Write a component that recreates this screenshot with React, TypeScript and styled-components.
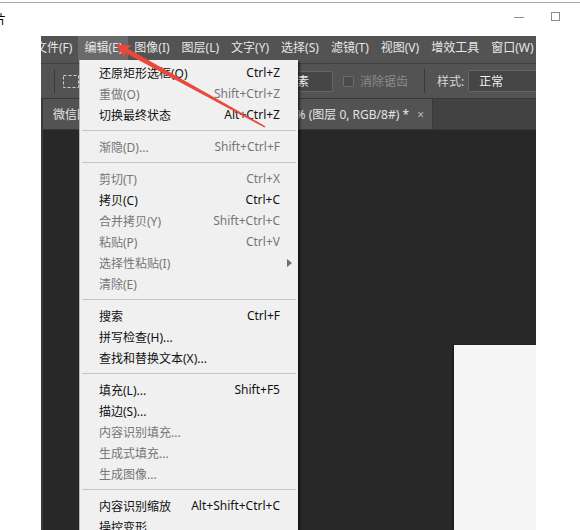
import React from "react";
import styled, { createGlobalStyle } from "styled-components";

const GlobalStyle = createGlobalStyle`
	html, body {
		margin: 0;
		padding: 0;
		background: #ffffff;
		overflow: hidden;
	}
	body {
		font-family: "Noto Sans", "Noto Sans CJK SC", sans-serif;
		font-size: 12px;
	}
`;

type MenuEntry =
	| { kind: "item"; label: string; shortcut?: string; disabled?: boolean; submenu?: boolean }
	| { kind: "sep" };

const topMenus = [
	"文件(F)",
	"编辑(E)",
	"图像(I)",
	"图层(L)",
	"文字(Y)",
	"选择(S)",
	"滤镜(T)",
	"视图(V)",
	"增效工具",
	"窗口(W)",
	"帮助(H)",
];

const editMenu: MenuEntry[] = [
	{ kind: "item", label: "还原矩形选框(O)", shortcut: "Ctrl+Z" },
	{ kind: "item", label: "重做(O)", shortcut: "Shift+Ctrl+Z", disabled: true },
	{ kind: "item", label: "切换最终状态", shortcut: "Alt+Ctrl+Z" },
	{ kind: "sep" },
	{ kind: "item", label: "渐隐(D)...", shortcut: "Shift+Ctrl+F", disabled: true },
	{ kind: "sep" },
	{ kind: "item", label: "剪切(T)", shortcut: "Ctrl+X", disabled: true },
	{ kind: "item", label: "拷贝(C)", shortcut: "Ctrl+C" },
	{ kind: "item", label: "合并拷贝(Y)", shortcut: "Shift+Ctrl+C", disabled: true },
	{ kind: "item", label: "粘贴(P)", shortcut: "Ctrl+V", disabled: true },
	{ kind: "item", label: "选择性粘贴(I)", disabled: true, submenu: true },
	{ kind: "item", label: "清除(E)", disabled: true },
	{ kind: "sep" },
	{ kind: "item", label: "搜索", shortcut: "Ctrl+F" },
	{ kind: "item", label: "拼写检查(H)..." },
	{ kind: "item", label: "查找和替换文本(X)..." },
	{ kind: "sep" },
	{ kind: "item", label: "填充(L)...", shortcut: "Shift+F5" },
	{ kind: "item", label: "描边(S)..." },
	{ kind: "item", label: "内容识别填充...", disabled: true },
	{ kind: "item", label: "生成式填充...", disabled: true },
	{ kind: "item", label: "生成图像...", disabled: true },
	{ kind: "sep" },
	{ kind: "item", label: "内容识别缩放", shortcut: "Alt+Shift+Ctrl+C" },
	{ kind: "item", label: "操控变形" },
	{ kind: "item", label: "透视变形" },
];

const App = () => (
	<>
		<GlobalStyle />
		<Page>
			<TopEdge />
			<TitleRow>
				<ClippedTitle>图片</ClippedTitle>
				<WindowControls>
					<MinimizeIcon />
					<MaximizeIcon />
				</WindowControls>
			</TitleRow>

			<PsWindow>
				<MenuBar>
					<MenuList>
						{topMenus.map((m) => (
							<TopMenu key={m} $active={m === "编辑(E)"}>
								{m}
							</TopMenu>
						))}
					</MenuList>
				</MenuBar>

				<OptionsBar>
					<BarSep />
					<MarqueeIcon width="16" height="13" viewBox="0 0 16 13">
						<rect
							x="0.5"
							y="0.5"
							width="15"
							height="12"
							fill="none"
							stroke="#d2d2d2"
							strokeDasharray="3 2"
						/>
					</MarqueeIcon>
					<HiddenGroup>
						<BarSep />
						<ModeIcon />
						<ModeIcon />
						<ModeIcon />
						<ModeIcon />
						<BarSep />
						<BarLabel>羽化:</BarLabel>
					</HiddenGroup>
					<FeatherBox>0 像素</FeatherBox>
					<CheckBox />
					<CheckLabel>消除锯齿</CheckLabel>
					<BarSep $space={16} />
					<BarLabel $space={12}>样式:</BarLabel>
					<StyleSelect>正常</StyleSelect>
				</OptionsBar>

				<Workspace>
					<TabBar>
						<DocTab>
							<TabTitle>微信图片_20250618152345_63_2.jpg @ 66.7% (图层 0, RGB/8#) *</TabTitle>
							<TabClose>×</TabClose>
						</DocTab>
					</TabBar>
					<Canvas>
						<Document />
					</Canvas>
				</Workspace>

				<Dropdown>
					{editMenu.map((entry, i) =>
						entry.kind === "sep" ? (
							<MenuSep key={i} />
						) : (
							<MenuRow key={i} $disabled={entry.disabled}>
								<span>{entry.label}</span>
								<Shortcut>{entry.shortcut}</Shortcut>
								{entry.submenu ? <SubArrow /> : <span />}
							</MenuRow>
						)
					)}
				</Dropdown>
			</PsWindow>

			<ArrowLayer width="580" height="530" viewBox="0 0 580 530">
				<polygon
					points="116,45 131.9,45.2 127.8,48.5 265.3,126.2 264.5,127.6 125.3,53.1 124.6,58.3"
					fill="#e9483a"
				/>
			</ArrowLayer>
		</Page>
	</>
);

export default App;

const Page = styled.div`
	position: relative;
	width: 580px;
	height: 530px;
	overflow: hidden;
	background: #ffffff;
`;

const TopEdge = styled.div`
	height: 2px;
	border-bottom: 1px solid #a6a6a6;
`;

const TitleRow = styled.div`
	display: flex;
	align-items: flex-start;
	height: 33px;
	box-sizing: border-box;
	padding-top: 9px;
`;

const ClippedTitle = styled.span`
	margin-left: -18px;
	margin-top: 1px;
	font-size: 12px;
	line-height: 14px;
	color: #000;
`;

const WindowControls = styled.div`
	display: flex;
	align-items: center;
	gap: 27px;
	margin-left: auto;
	padding-right: 20px;
	height: 9px;
`;

const MinimizeIcon = styled.div`
	width: 10px;
	height: 1px;
	margin-top: 2px;
	background: #8c8c8c;
`;

const MaximizeIcon = styled.div`
	width: 9px;
	height: 9px;
	box-sizing: border-box;
	border: 1px solid #8c8c8c;
`;

const PsWindow = styled.div`
	position: relative;
	display: flex;
	flex-direction: column;
	margin-left: 41px;
	width: 495px;
	height: 494px;
	overflow: hidden;
	background: #282828;
`;

const MenuBar = styled.div`
	height: 27px;
	background: #535353;
	border-bottom: 1px solid #404040;
	overflow: hidden;
	flex: none;
`;

const MenuList = styled.div`
	display: flex;
	margin-left: -12px;
`;

const TopMenu = styled.div<{ $active?: boolean }>`
	flex: none;
	height: 24px;
	line-height: 24px;
	padding: 0 6px;
	color: #e6e6e6;
	white-space: nowrap;
	background: ${({ $active }) => ($active ? "#6a6a6a" : "transparent")};
`;

const OptionsBar = styled.div`
	display: flex;
	align-items: center;
	flex: none;
	height: 34px;
	padding-left: 13px;
	background: #535353;
	border-bottom: 1px solid #393939;
	white-space: nowrap;
	overflow: hidden;
`;

const BarSep = styled.div<{ $space?: number }>`
	flex: none;
	width: 1px;
	height: 24px;
	margin-left: ${({ $space }) => $space ?? 0}px;
	background: #393939;
`;

const MarqueeIcon = styled.svg`
	flex: none;
	margin-left: 8px;
`;

const HiddenGroup = styled.div`
	display: flex;
	align-items: center;
	justify-content: space-between;
	flex: none;
	width: 190px;
	padding-left: 10px;
	box-sizing: border-box;
`;

const ModeIcon = styled.div`
	width: 14px;
	height: 12px;
	border: 1px solid #cfcfcf;
	box-sizing: border-box;
`;

const BarLabel = styled.span<{ $space?: number }>`
	flex: none;
	margin-left: ${({ $space }) => $space ?? 0}px;
	color: #d6d6d6;
`;

const FeatherBox = styled.div`
	display: flex;
	align-items: center;
	flex: none;
	width: 64px;
	height: 21px;
	box-sizing: border-box;
	padding-left: 5px;
	border: 1px solid #666666;
	border-radius: 2px;
	background: #464646;
	color: #ececec;
`;

const CheckBox = styled.div`
	flex: none;
	width: 11px;
	height: 11px;
	margin-left: 10px;
	box-sizing: border-box;
	border: 1px solid #6c6c6c;
	border-radius: 1px;
	background: #4a4a4a;
`;

const CheckLabel = styled.span`
	margin-left: 6px;
	color: #8b8b8b;
`;

const StyleSelect = styled.div`
	display: flex;
	align-items: center;
	flex: none;
	width: 110px;
	height: 22px;
	margin-left: 4px;
	padding-left: 10px;
	box-sizing: border-box;
	border: 1px solid #666666;
	border-radius: 2px;
	background: #454545;
	color: #f2f2f2;
`;

const Workspace = styled.div`
	display: flex;
	flex-direction: column;
	flex: 1;
	min-height: 0;
	border-left: 2px solid #3b3b3b;
`;

const TabBar = styled.div`
	display: flex;
	flex: none;
	height: 30px;
	background: #424242;
	border-bottom: 1px solid #393939;
`;

const DocTab = styled.div`
	display: flex;
	align-items: center;
	width: 390px;
	box-sizing: border-box;
	padding: 0 8px 0 10px;
	background: #535353;
	border-right: 1px solid #393939;
	overflow: hidden;
`;

const TabTitle = styled.span`
	flex: none;
	white-space: nowrap;
	color: #e4e4e4;
`;

const TabClose = styled.span`
	margin-left: auto;
	padding-left: 8px;
	color: #b4b4b4;
	font-size: 12px;
`;

const Canvas = styled.div`
	display: flex;
	flex: 1;
	padding: 215px 0 0 411px;
	background: #282828;
`;

const Document = styled.div`
	flex: 1;
	background: #f5f5f5;
	box-shadow: -1px 0 2px rgba(0, 0, 0, 0.5);
`;

const Dropdown = styled.div`
	position: absolute;
	left: 38px;
	top: 24px;
	width: 219px;
	box-sizing: border-box;
	padding-top: 2px;
	background: #f0f0f0;
	border-left: 1px solid #b8b8b8;
	box-shadow: 2px 2px 2px rgba(0, 0, 0, 0.55);
	z-index: 5;
`;

const MenuRow = styled.div<{ $disabled?: boolean }>`
	display: grid;
	grid-template-columns: 1fr auto 12px;
	align-items: center;
	height: 21px;
	padding: 0 6px 0 19px;
	white-space: nowrap;
	color: ${({ $disabled }) => ($disabled ? "#767676" : "#101010")};
`;

const Shortcut = styled.span`
	text-align: right;
`;

const SubArrow = styled.span`
	justify-self: end;
	width: 0;
	height: 0;
	border-top: 4px solid transparent;
	border-bottom: 4px solid transparent;
	border-left: 5px solid #6e6e6e;
`;

const MenuSep = styled.div`
	display: flex;
	align-items: center;
	height: 11px;

	&::before {
		content: "";
		flex: 1;
		height: 1px;
		margin: 0 2px 0 2px;
		background: #c4c4c4;
	}
`;

const ArrowLayer = styled.svg`
	position: absolute;
	left: 0;
	top: 0;
	pointer-events: none;
	z-index: 10;
`;
